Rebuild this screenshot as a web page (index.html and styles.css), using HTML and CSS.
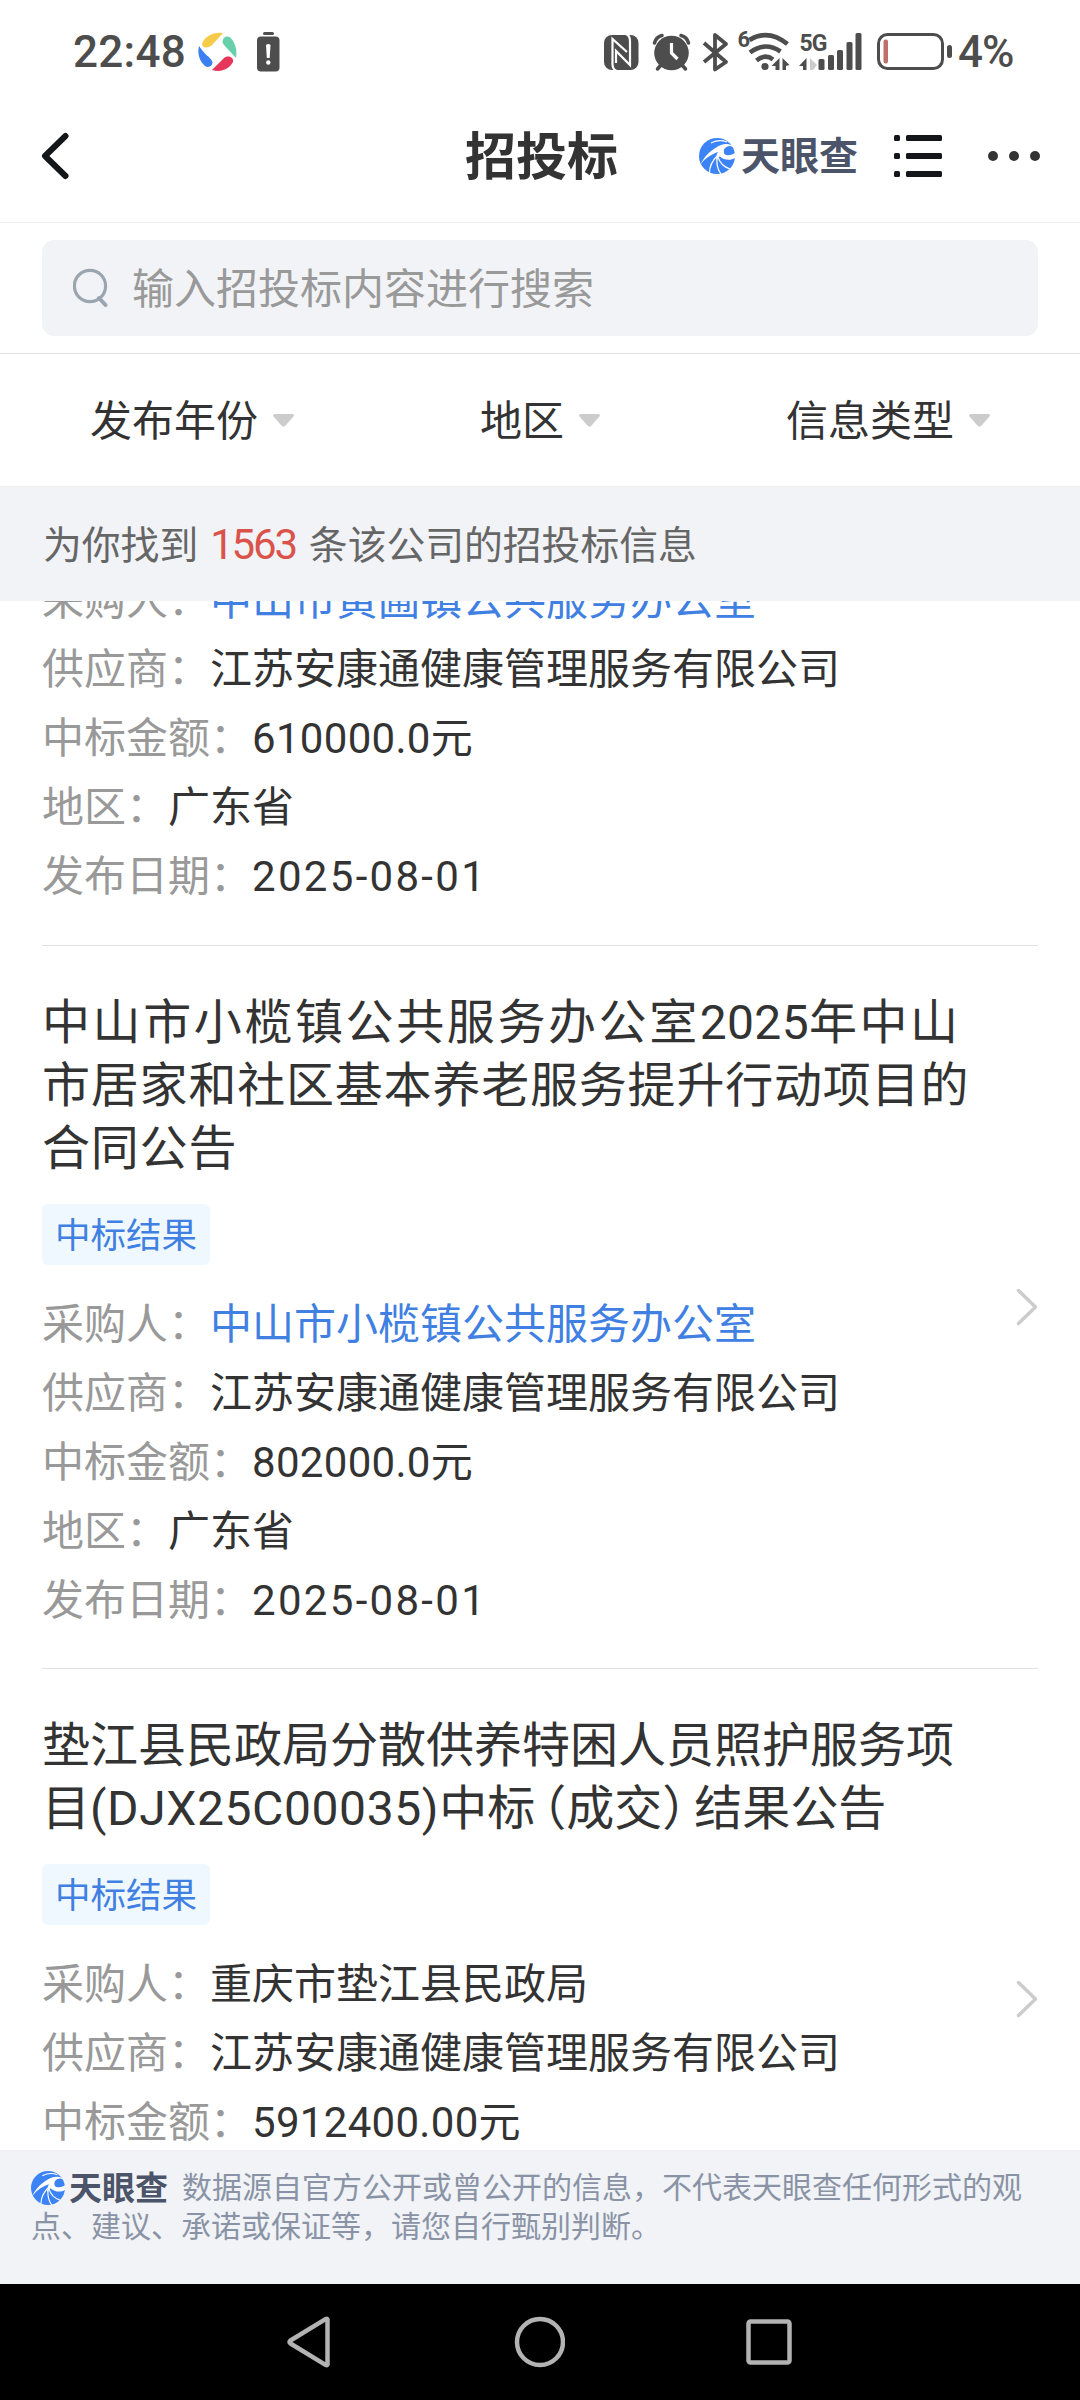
FILE: index.html
```
<!DOCTYPE html>
<html lang="zh-CN">
  <head>
    <meta charset="UTF-8">
    <title>招投标</title>
    <meta name="viewport" content="width=device-width, initial-scale=1">
    <link rel="stylesheet" href="styles.css">
  </head>

  <body>
    <svg class="defs" width="0" height="0">
      <symbol id="logo" viewBox="0 0 36 36">
        <circle cx="18" cy="18" r="18" fill="#3c84f5"/>
        <path d="M1 27C6 17 13 11 22 7C27 5 33 6 34.500 9L31 8C27 8 24 11 25 15C26 18 31 18 36 15V20C31 23 25 22 21 18.500C19.500 18.500 18.500 20 18 23C17 20 17 17 19 14C13 16 6 20 1 27Z" fill="#fff"/>
        <g fill="none" stroke="#fff" stroke-width="1.200">
          <path d="M12 5C17 2.500 23 2 28 4"/>
          <path d="M10.500 35C10.500 29 13 23 18 18"/>
          <path d="M22 36C18 31 17.500 26 18 20"/>
          <path d="M31 31C25 29 21 26 19 19"/>
        </g>
      </symbol>
      <symbol id="down" viewBox="0 0 21 13">
        <path d="M2 0H19C21 0 21.500 1.800 20 3L13 11C11.500 13 9.500 13 8 11L1 3C-.5 1.800 0 0 2 0Z" fill="#ccc"/>
      </symbol>
      <symbol id="right" viewBox="0 0 22 38">
        <path d="M2.500 2.500L19.500 19L2.500 35.500" fill="none" stroke="#ccc" stroke-width="3.500" stroke-linecap="round" stroke-linejoin="round"/>
      </symbol>
    </svg>

    <div class="statusbar">
      <span class="clock">22:48</span>
      <svg class="app" width="39" height="40" viewBox="0 0 39 40">
        <path d="M4 12C7 4 15 0 25 1L15 12C11 17 4 16 4 12Z" fill="#f6cb4a"/>
        <path d="M26 6C29 3 33 5 35 9C38 14 39 19 38 26L26 13C24 11 24 8 26 6Z" fill="#67d0aa"/>
        <path d="M1 14C-1 22 2 30 7 34C11 37 16 33 14 29C12 25 7 23 1 14Z" fill="#3b7ff2"/>
        <path d="M14 38C23 41 31 37 35 30C36 25 30 23 26 26Z" fill="#e6365c"/>
      </svg>
      <svg width="23" height="40" viewBox="0 0 23 40">
        <rect x="6" y="0" width="11" height="3" rx="1.500" fill="#4d4d4d"/>
        <rect x="0" y="4.500" width="22.500" height="35" rx="4" fill="#4d4d4d"/>
        <path d="M9 13Q11.300 11 13.500 13L12.700 26H9.800Z" fill="#fff"/>
        <circle cx="11.300" cy="30.500" r="2.200" fill="#fff"/>
      </svg>
      <svg class="icons" width="350" height="44" viewBox="603 29 350 44">
        <!-- nfc -->
        <rect x="604" y="34" width="34.500" height="35" rx="8" fill="#4d4d4d"/>
        <path d="M617 70Q612.500 69 612.500 63V38L627 51M625.500 33Q630 34 630 40V64L616 50V62" fill="none" stroke="#fff" stroke-width="2.200"/>
        <!-- alarm -->
        <g fill="none" stroke="#4d4d4d" stroke-width="3.500" stroke-linecap="round">
          <path d="M654.500 42Q656 36 662 34.500M688.500 42Q687 36 681 34.500M661 64L657.500 68M682 64L685.500 68"/>
        </g>
        <circle cx="671.500" cy="52" r="17.300" fill="#4d4d4d"/>
        <path d="M671.500 42V52L677.500 58" fill="none" stroke="#fff" stroke-width="3.200"/>
        <!-- bluetooth -->
        <path d="M704 42L726 61L715 68.500V34L726 43L704 61" fill="none" stroke="#4d4d4d" stroke-width="3.800" stroke-linejoin="round"/>
        <!-- wifi -->
        <text x="737.500" y="46" class="mini">6</text>
        <g fill="none" stroke="#4d4d4d" stroke-width="4.600">
          <path d="M749.500 39Q768 27.500 787.500 43"/>
          <path d="M750 51.500Q765 40 780.500 50.500"/>
          <path d="M756.500 59.500Q765 52.500 773 58.500"/>
        </g>
        <circle cx="765" cy="65.500" r="3.600" fill="#4d4d4d"/>
        <path d="M779.500 57V69H775.500V65H771.500ZM782.500 57L789.500 64L786 65V69H782.500Z" fill="#4d4d4d"/>
        <!-- 5G signal -->
        <text x="799.500" y="50" class="mini five">5G</text>
        <path d="M806.500 57V69H803V65H799Z" fill="#4d4d4d"/>
        <path d="M810 57L817 64L813 69H810Z" fill="#ccc"/>
        <g fill="#4d4d4d">
          <rect x="818.500" y="58" width="6" height="11" rx="1.500"/>
          <rect x="828" y="54" width="6" height="15" rx="1.500"/>
          <rect x="837" y="49" width="6" height="20" rx="1.500"/>
          <rect x="846.500" y="41" width="6" height="28" rx="1.500"/>
          <rect x="855.500" y="32" width="6" height="37" rx="1.500"/>
        </g>
        <!-- battery -->
        <rect x="878.500" y="33.500" width="64" height="34" rx="9" fill="none" stroke="#4d4d4d" stroke-width="3"/>
        <rect x="883.500" y="38.500" width="4.500" height="24" rx="2" fill="#c0706a"/>
        <rect x="947" y="44" width="5" height="13" rx="2.500" fill="#4d4d4d"/>
      </svg>
      <span class="percent">4%</span>
    </div>

    <div class="header">
      <svg class="back" width="30" height="48" viewBox="0 0 30 48">
        <path d="M25.500 4L5 24L25.500 44" fill="none" stroke="#15161a" stroke-width="6" stroke-linecap="round" stroke-linejoin="round"/>
      </svg>
      <h1 class="title">招投标</h1>
      <div class="brand">
        <svg width="36" height="36"><use href="#logo"/></svg>
        <b>天眼查</b>
      </div>
      <svg class="menu" width="48" height="42" viewBox="0 0 48 42" fill="#15161a">
        <rect x="0" y="0" width="6" height="6" rx="1.500"/><rect x="12" y="0" width="36" height="6" rx="1.500"/>
        <rect x="0" y="18" width="6" height="6" rx="1.500"/><rect x="12" y="18" width="36" height="6" rx="1.500"/>
        <rect x="0" y="36" width="6" height="6" rx="1.500"/><rect x="12" y="36" width="36" height="6" rx="1.500"/>
      </svg>
      <svg class="more" width="52" height="10" viewBox="0 0 52 10" fill="#333">
        <circle cx="5" cy="5" r="5"/><circle cx="26" cy="5" r="5"/><circle cx="47" cy="5" r="5"/>
      </svg>
    </div>

    <div class="searchbar">
      <div class="search">
        <svg width="38" height="40" viewBox="0 0 38 40">
          <circle cx="17" cy="18" r="15.600" fill="none" stroke="#9ba5b0" stroke-width="3.200"/>
          <path d="M26 30L32.500 37" stroke="#9ba5b0" stroke-width="4" stroke-linecap="round"/>
        </svg>
        <span>输入招投标内容进行搜索</span>
      </div>
    </div>

    <div class="filters">
      <div class="filter"><span>发布年份</span><svg width="21" height="13"><use href="#down"/></svg></div>
      <div class="filter"><span>地区</span><svg width="21" height="13"><use href="#down"/></svg></div>
      <div class="filter"><span>信息类型</span><svg width="21" height="13"><use href="#down"/></svg></div>
    </div>

    <div class="count">为你找到<em>1563</em>条该公司的招投标信息</div>

    <div class="list">
      <div class="item scrolled">
        <div class="info">
          <p class="row"><label>采购人：</label><a>中山市黄圃镇公共服务办公室</a></p>
          <p class="row"><label>供应商：</label>江苏安康通健康管理服务有限公司</p>
          <p class="row"><label>中标金额：</label><span class="num">610000.0</span>元</p>
          <p class="row"><label>地区：</label>广东省</p>
          <p class="row"><label>发布日期：</label><span class="date">2025-08-01</span></p>
        </div>
      </div>

      <div class="item">
        <div class="info">
          <h2 class="name">
            <span class="line wide">中山市小榄镇公共服务办公室<span class="year">2025</span>年中山</span>
            <span class="line mid">市居家和社区基本养老服务提升行动项目的</span>
            <span class="line mid">合同公告</span>
          </h2>
          <div class="tag">中标结果</div>
          <p class="row"><label>采购人：</label><a>中山市小榄镇公共服务办公室</a></p>
          <p class="row"><label>供应商：</label>江苏安康通健康管理服务有限公司</p>
          <p class="row"><label>中标金额：</label><span class="num">802000.0</span>元</p>
          <p class="row"><label>地区：</label>广东省</p>
          <p class="row"><label>发布日期：</label><span class="date">2025-08-01</span></p>
        </div>
        <svg class="arrow" width="22" height="38"><use href="#right"/></svg>
      </div>

      <div class="item">
        <div class="info">
          <h2 class="name">
            <span class="line">垫江县民政局分散供养特困人员照护服务项</span>
            <span class="line">目<span class="code">(DJX25C00035)</span>中标<span class="open">（</span>成交<span class="close">）</span>结果公告</span>
          </h2>
          <div class="tag">中标结果</div>
          <p class="row"><label>采购人：</label>重庆市垫江县民政局</p>
          <p class="row"><label>供应商：</label>江苏安康通健康管理服务有限公司</p>
          <p class="row"><label>中标金额：</label><span class="num">5912400.00</span>元</p>
          <p class="row"></p>
          <p class="row"></p>
        </div>
        <svg class="arrow" width="22" height="38"><use href="#right"/></svg>
      </div>
    </div>

    <div class="footer">
      <div class="brand small">
        <svg width="34" height="34"><use href="#logo"/></svg>
        <b>天眼查</b>
      </div>数据源自官方公开或曾公开的信息，不代表天眼查任何形式的观点、建议、承诺或保证等，请您自行甄别判断。
    </div>

    <div class="navbar">
      <svg width="46" height="52" viewBox="0 0 46 52">
        <path d="M42.500 3.500V48.500Q42 49.500 40.500 48.800L5.500 27.500Q3.500 26 5.500 24.500L40.500 3.200Q42 2.500 42.500 3.500Z" fill="none" stroke="#b3b3b3" stroke-width="4.500" stroke-linejoin="round"/>
      </svg>
      <svg width="52" height="52" viewBox="0 0 52 52">
        <circle cx="27" cy="26" r="23" fill="none" stroke="#b3b3b3" stroke-width="4.500"/>
      </svg>
      <svg width="46" height="46" viewBox="0 0 46 46">
        <rect x="2.500" y="2.500" width="41" height="41" rx="2" fill="none" stroke="#b3b3b3" stroke-width="4.500"/>
      </svg>
    </div>
  </body>
</html>
```

FILE: styles.css
```
* {
  box-sizing: border-box;
}
body {
  margin: 0;
  width: 1080px;
  height: 2400px;
  overflow: hidden;
  display: flex;
  flex-direction: column;
  background: #fff;
  color: #333;
  font-family: Roboto, "Noto Sans CJK SC", sans-serif;
  font-size: 42px;
}
svg {
  display: block;
  flex-shrink: 0;
}
.defs {
  position: absolute;
}

.statusbar {
  height: 90px;
  padding: 13px 66px 0 73px;
  display: flex;
  align-items: center;
  color: #4d4d4d;
  font-size: 44px;
  font-weight: 500;
}
.clock {
  width: 125px;
  white-space: nowrap;
  letter-spacing: 0.300px;
}
.app {
  margin-right: 20px;
}
.icons {
  margin-left: auto;
}
.percent {
  width: 61px;
  padding-left: 5px;
  letter-spacing: -1px;
}
.mini {
  font-size: 22px;
  font-weight: 700;
  fill: #4d4d4d;
}
.five {
  font-size: 23px;
  letter-spacing: -1px;
}

.header {
  height: 133px;
  padding: 0 40px;
  display: flex;
  align-items: center;
  border-bottom: 1px solid #eee;
}
.title {
  margin: 0 0 0 395px;
  padding-top: 3px;
  width: 234px;
  font-size: 51px;
  font-weight: 700;
  line-height: 60px;
}
.brand {
  display: flex;
  align-items: center;
  width: 195px;
  gap: 6px;
  color: #4b5468;
}
.brand b {
  padding-top: 2px;
  font-size: 39px;
  font-weight: 700;
  line-height: 40px;
}
.more {
  margin-left: 46px;
}

.searchbar {
  height: 131px;
  padding: 17px 42px;
  border-bottom: 1px solid #e0e0e0;
}
.search {
  height: 96px;
  padding-left: 31px;
  display: flex;
  align-items: center;
  gap: 21px;
  border-radius: 12px;
  background: #f1f3f6;
  color: #999;
}
.search span,
.filter span {
  padding-bottom: 6px;
}

.filters {
  height: 132px;
  padding: 0 18px;
  display: flex;
}
.filter {
  flex: 1;
  display: flex;
  align-items: center;
  justify-content: center;
  gap: 15px;
}

.count {
  height: 115px;
  padding-left: 43px;
  border-top: 1px solid #eee;
  background: #f1f3f6;
  color: #666;
  font-size: 38.800px;
  line-height: 115px;
}
.count em {
  margin: 0 13px 0 12px;
  color: #d9534a;
  font-style: normal;
  font-size: 42px;
  letter-spacing: -2.200px;
}

.list {
  flex: 1;
  overflow: hidden;
}
.item {
  margin: 0 42px;
  padding: 45px 0 33px;
  display: flex;
  align-items: center;
  justify-content: space-between;
  border-bottom: 1px solid #e0e0e0;
}
.scrolled {
  margin-top: -36px;
  padding: 1px 0 34px;
}
.name {
  margin: 0 0 24px;
  font-size: 48px;
  font-weight: 400;
  line-height: 63px;
}
.line {
  display: block;
  white-space: nowrap;
}
.wide {
  letter-spacing: 2.600px;
}
.mid {
  letter-spacing: 0.800px;
}
.year {
  letter-spacing: 0.300px;
}
.code {
  letter-spacing: 0.600px;
}
.open {
  margin-left: -17px;
}
.close {
  margin-right: -16px;
}
.tag {
  width: 168px;
  height: 61px;
  margin-bottom: 25px;
  border-radius: 6px;
  background: #f0f8ff;
  color: #3f80e2;
  font-size: 35.500px;
  line-height: 64px;
  text-align: center;
}
.row {
  margin: 0;
  height: 69px;
  line-height: 70px;
  white-space: nowrap;
}
.row label {
  color: #999;
}
.row a {
  color: #3f80e2;
}
.num {
  letter-spacing: 0.300px;
}
.date {
  letter-spacing: 2.300px;
}
.arrow {
  margin-bottom: 12px;
}

.footer {
  height: 134px;
  padding: 18px 50px 0 31px;
  background: #f1f3f6;
  color: #8a93a6;
  font-size: 30px;
  line-height: 39px;
}
.small {
  display: inline-flex;
  width: 151px;
  gap: 4px;
  vertical-align: top;
}
.small b {
  font-size: 33px;
  line-height: 37px;
}

.navbar {
  height: 116px;
  padding: 0 288px 0 285px;
  display: flex;
  align-items: center;
  justify-content: space-between;
  background: #000;
}
```
